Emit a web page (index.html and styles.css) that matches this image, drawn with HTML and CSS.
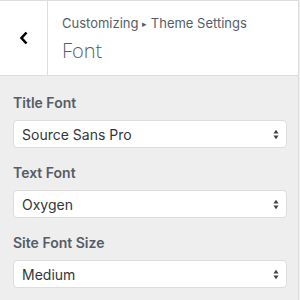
FILE: index.html
```html
<!DOCTYPE html>
<html lang="en">
<head>
    <meta charset="UTF-8">
    <meta name="viewport" content="width=device-width, initial-scale=1.0">
    <title>Customizing - Font</title>
    <link rel="stylesheet" href="styles.css">
</head>
<body>
    <div class="panel">
        <div class="header">
            <div class="back">
                <svg width="10" height="14" viewBox="0 0 10 14">
                    <path d="M7.5 1.5 L2.5 7 L7.5 12.5" fill="none" stroke="#000" stroke-width="2.6"/>
                </svg>
            </div>
            <div class="title">
                <div class="crumb">Customizing <span class="sep">&#9656;</span> Theme Settings</div>
                <div class="name">Font</div>
            </div>
        </div>

        <div class="content">
            <div class="form-group">
                <label>Title Font</label>
                <div class="select">
                    <span>Source Sans Pro</span>
                    <svg class="arrows" width="6" height="11" viewBox="0 0 6 11">
                        <path d="M3 0.8 L5.6 4.6 L0.4 4.6 Z M3 10.2 L5.6 6.4 L0.4 6.4 Z" fill="#444"/>
                    </svg>
                </div>
            </div>
            <div class="form-group">
                <label>Text Font</label>
                <div class="select">
                    <span>Oxygen</span>
                    <svg class="arrows" width="6" height="11" viewBox="0 0 6 11">
                        <path d="M3 0.8 L5.6 4.6 L0.4 4.6 Z M3 10.2 L5.6 6.4 L0.4 6.4 Z" fill="#444"/>
                    </svg>
                </div>
            </div>
            <div class="form-group">
                <label>Site Font Size</label>
                <div class="select">
                    <span>Medium</span>
                    <svg class="arrows" width="6" height="11" viewBox="0 0 6 11">
                        <path d="M3 0.8 L5.6 4.6 L0.4 4.6 Z M3 10.2 L5.6 6.4 L0.4 6.4 Z" fill="#444"/>
                    </svg>
                </div>
            </div>
        </div>
    </div>
</body>
</html>
```

FILE: styles.css
```css
body {
    margin: 0;
    font-family: Inter, "Noto Sans", sans-serif;
    background-color: #eeeeee;
}
.panel {
    width: 299px;
    height: 300px;
    border-top: 1px solid #dddddd;
    border-right: 1px solid #dddddd;
    box-sizing: border-box;
}
.header {
    display: flex;
    height: 74px;
    background-color: white;
    border-bottom: 1px solid #dddddd;
}
.back {
    width: 47px;
    border-right: 1px solid #dddddd;
    display: flex;
    align-items: center;
    justify-content: center;
}
.title {
    padding: 12px 0 0 14px;
    color: #555d66;
}
.crumb {
    font-size: 13px;
    line-height: 20px;
}
.sep {
    font-size: 9px;
    vertical-align: 1px;
}
.name {
    font-family: "Open Sans", sans-serif;
    font-size: 20px;
    font-weight: 300;
    line-height: 28px;
    margin-top: 3px;
}
.content {
    padding: 17px 11px 0 13px;
}
.form-group {
    margin-bottom: 15px;
}
label {
    display: block;
    font-size: 14px;
    font-weight: 600;
    line-height: 20px;
    color: #555d66;
    margin-bottom: 7px;
}
.select {
    display: flex;
    align-items: center;
    justify-content: space-between;
    height: 28px;
    padding: 0 7px 0 8px;
    background-color: white;
    border: 1px solid #dddddd;
    border-radius: 4px;
    box-sizing: border-box;
    font-size: 14px;
    color: #32373c;
}
```
